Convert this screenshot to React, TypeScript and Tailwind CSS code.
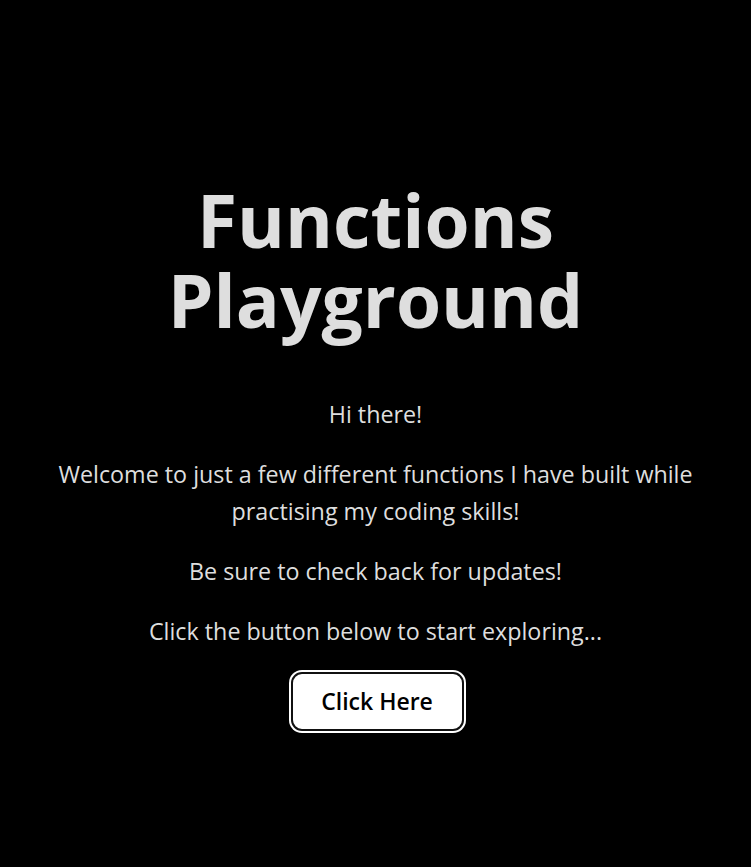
export default function App() {
  return (
    <div className="min-h-[867px] bg-black text-[#dedede] flex flex-col items-center pt-[180px] px-[40px] text-center" style={{ fontFamily: '"Open Sans", "Noto Sans", sans-serif' }}>
      <h1 className="text-[73px] leading-[80px] font-bold">Functions<br />Playground</h1>
      <div className="mt-[56px] text-[23.3px] leading-[37px]">
        <p>Hi there!</p>
        <p className="mt-[23px] max-w-[660px]">Welcome to just a few different functions I have built while practising my coding skills!</p>
        <p className="mt-[23px]">Be sure to check back for updates!</p>
        <p className="mt-[23px]">Click the button below to start exploring...</p>
      </div>
      <button className="mt-[22px] ml-[3px] w-[173px] h-[59px] rounded-[11px] bg-white border-2 border-[#111] shadow-[0_0_0_2px_#ffffff] text-black text-[23px] font-semibold">Click Here</button>
    </div>
  );
}
